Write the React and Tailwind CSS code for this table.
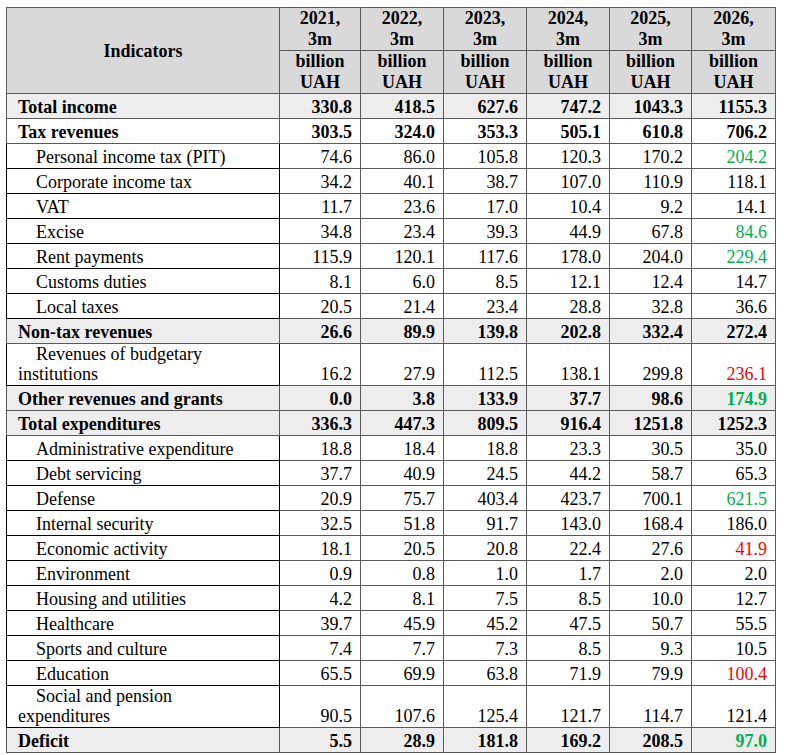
const years = ['2021', '2022', '2023', '2024', '2025', '2026']

// kind: total (bold, shaded), bold (bold, white), sub (indented)
const rows = [
  { label: 'Total income', kind: 'total', v: ['330.8', '418.5', '627.6', '747.2', '1043.3', '1155.3'] },
  { label: 'Tax revenues', kind: 'bold', v: ['303.5', '324.0', '353.3', '505.1', '610.8', '706.2'] },
  { label: 'Personal income tax (PIT)', kind: 'sub', v: ['74.6', '86.0', '105.8', '120.3', '170.2', '204.2'], c: 'g' },
  { label: 'Corporate income tax', kind: 'sub', v: ['34.2', '40.1', '38.7', '107.0', '110.9', '118.1'] },
  { label: 'VAT', kind: 'sub', v: ['11.7', '23.6', '17.0', '10.4', '9.2', '14.1'] },
  { label: 'Excise', kind: 'sub', v: ['34.8', '23.4', '39.3', '44.9', '67.8', '84.6'], c: 'g' },
  { label: 'Rent payments', kind: 'sub', v: ['115.9', '120.1', '117.6', '178.0', '204.0', '229.4'], c: 'g' },
  { label: 'Customs duties', kind: 'sub', v: ['8.1', '6.0', '8.5', '12.1', '12.4', '14.7'] },
  { label: 'Local taxes', kind: 'sub', v: ['20.5', '21.4', '23.4', '28.8', '32.8', '36.6'] },
  { label: 'Non-tax revenues', kind: 'total', v: ['26.6', '89.9', '139.8', '202.8', '332.4', '272.4'] },
  { label: 'Revenues of budgetary', label2: 'institutions', kind: 'sub', v: ['16.2', '27.9', '112.5', '138.1', '299.8', '236.1'], c: 'r' },
  { label: 'Other revenues and grants', kind: 'total', v: ['0.0', '3.8', '133.9', '37.7', '98.6', '174.9'], c: 'g' },
  { label: 'Total expenditures', kind: 'total', v: ['336.3', '447.3', '809.5', '916.4', '1251.8', '1252.3'] },
  { label: 'Administrative expenditure', kind: 'sub', v: ['18.8', '18.4', '18.8', '23.3', '30.5', '35.0'] },
  { label: 'Debt servicing', kind: 'sub', v: ['37.7', '40.9', '24.5', '44.2', '58.7', '65.3'] },
  { label: 'Defense', kind: 'sub', v: ['20.9', '75.7', '403.4', '423.7', '700.1', '621.5'], c: 'g' },
  { label: 'Internal security', kind: 'sub', v: ['32.5', '51.8', '91.7', '143.0', '168.4', '186.0'] },
  { label: 'Economic activity', kind: 'sub', v: ['18.1', '20.5', '20.8', '22.4', '27.6', '41.9'], c: 'r' },
  { label: 'Environment', kind: 'sub', v: ['0.9', '0.8', '1.0', '1.7', '2.0', '2.0'] },
  { label: 'Housing and utilities', kind: 'sub', v: ['4.2', '8.1', '7.5', '8.5', '10.0', '12.7'] },
  { label: 'Healthcare', kind: 'sub', v: ['39.7', '45.9', '45.2', '47.5', '50.7', '55.5'] },
  { label: 'Sports and culture', kind: 'sub', v: ['7.4', '7.7', '7.3', '8.5', '9.3', '10.5'] },
  { label: 'Education', kind: 'sub', v: ['65.5', '69.9', '63.8', '71.9', '79.9', '100.4'], c: 'r' },
  { label: 'Social and pension', label2: 'expenditures', kind: 'sub', v: ['90.5', '107.6', '125.4', '121.7', '114.7', '121.4'] },
  { label: 'Deficit', kind: 'total', v: ['5.5', '28.9', '181.8', '169.2', '208.5', '97.0'], c: 'g' },
]

export default function App() {
  return (
    <div className="min-h-screen bg-white pt-[7px] pl-[6px]" style={{ fontFamily: '"Liberation Serif", "Times New Roman", serif' }}>
      <table className="table-fixed border-collapse w-[769px] text-[18px] leading-[20px] text-black">
        <colgroup>
          <col className="w-[273px]" />
          <col className="w-[81px]" />
          <col className="w-[83px]" />
          <col className="w-[83px]" />
          <col className="w-[83px]" />
          <col className="w-[82px]" />
          <col className="w-[84px]" />
        </colgroup>
        <thead>
          <tr className="h-[43px] bg-[#d9d9d9] font-bold">
            <th rowSpan={2} className="border border-[#5a5a5a] text-center align-middle">Indicators</th>
            {years.map(y => (
              <th key={y} className="border border-[#5a5a5a] text-center align-middle leading-[21px]">
                {y},<br />3m
              </th>
            ))}
          </tr>
          <tr className="h-[42px] bg-[#d9d9d9] font-bold">
            {years.map(y => (
              <th key={y} className="border border-[#5a5a5a] text-center align-middle leading-[21px]">
                billion<br />UAH
              </th>
            ))}
          </tr>
        </thead>
        <tbody>
          {rows.map(r => {
            const bold = r.kind !== 'sub'
            const shaded = r.kind === 'total'
            return (
              <tr
                key={r.label}
                className={`${r.label2 ? 'h-[42px]' : 'h-[25px]'} ${shaded ? 'bg-[#ededed]' : 'bg-white'} ${bold ? 'font-bold' : ''}`}
              >
                <td
                  className={`border pl-[11px] pr-1 align-bottom pb-[1px] whitespace-nowrap ${bold ? 'border-[#5a5a5a]' : 'border-black indent-[18px]'}`}
                >
                  {r.label}
                  {r.label2 && (
                    <>
                      <br />
                      {r.label2}
                    </>
                  )}
                </td>
                {r.v.map((val, i) => {
                  const last = i === 5
                  const color = last && r.c === 'g' ? 'text-[#00b050]' : last && r.c === 'r' ? 'text-[#ff0000]' : ''
                  return (
                    <td
                      key={i}
                      className={`border border-[#5a5a5a] text-right pr-[8px] align-bottom pb-[1px] ${color}`}
                    >
                      {val}
                    </td>
                  )
                })}
              </tr>
            )
          })}
        </tbody>
      </table>
    </div>
  )
}
